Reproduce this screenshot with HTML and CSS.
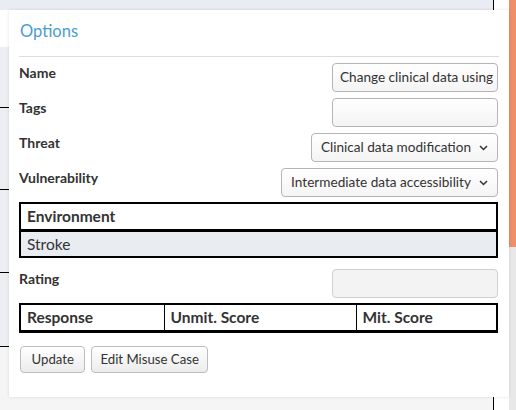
FILE: index.html
```html
<!DOCTYPE html>
<html>
<head>
<meta charset="utf-8">
<link rel="stylesheet" href="styles.css">
</head>
<body>
<div class="page">
  <div class="main">
    <div class="bg">
      <div class="bg-top"></div>
      <div class="bg-white"></div>
      <div class="bg-band b1"></div>
      <div class="bg-band b2"></div>
      <div class="bg-band b3"></div>
      <div class="bg-band b4"></div>
      <div class="bg-rest"></div>
    </div>
    <div class="modal">
      <div class="modal-title">Options</div>
      <div class="modal-body">
        <div class="row">
          <label class="lbl">Name</label>
          <div class="field w166">Change clinical data using</div>
        </div>
        <div class="row">
          <label class="lbl">Tags</label>
          <div class="field w166"></div>
        </div>
        <div class="row">
          <label class="lbl">Threat</label>
          <div class="field select">Clinical data modification<svg class="chev" width="9" height="6" viewBox="0 0 9 6"><polyline points="1,1 4.5,4.5 8,1" fill="none" stroke="#333" stroke-width="1.5"/></svg></div>
        </div>
        <div class="row">
          <label class="lbl">Vulnerability</label>
          <div class="field select">Intermediate data accessibility<svg class="chev" width="9" height="6" viewBox="0 0 9 6"><polyline points="1,1 4.5,4.5 8,1" fill="none" stroke="#333" stroke-width="1.5"/></svg></div>
        </div>
        <table class="tbl env">
          <thead><tr><th>Environment</th></tr></thead>
          <tbody><tr><td>Stroke</td></tr></tbody>
        </table>
        <div class="row rating">
          <label class="lbl">Rating</label>
          <div class="field w166 disabled"></div>
        </div>
        <table class="tbl resp">
          <thead><tr><th class="c1">Response</th><th class="c2">Unmit. Score</th><th class="c3">Mit. Score</th></tr></thead>
        </table>
        <div class="buttons">
          <button class="btn btn-update">Update</button>
          <button class="btn">Edit Misuse Case</button>
        </div>
      </div>
    </div>
  </div>
  <div class="scrollbar"><div class="thumb"></div></div>
</div>
</body>
</html>
```
FILE: styles.css
```css
* { box-sizing: border-box; }
html, body { margin: 0; padding: 0; }
body {
  width: 516px;
  height: 410px;
  overflow: hidden;
  font-family: "Lato", "Liberation Sans", sans-serif;
  color: #333;
  background: #fff;
}
.page { display: flex; width: 516px; height: 410px; }
.main { position: relative; width: 509px; height: 410px; }
.bg { display: flex; flex-direction: column; height: 410px; }
.bg-top { height: 10px; background: #e9ecf2; border-right: 1px solid #000; margin-right: 15px; }
.bg-white { height: 37px; background: #fff; }
.bg-band { background: #eceef2; border-bottom: 1px solid #000; }
.b1 { height: 61px; }
.b2 { height: 82px; }
.b3 { height: 83px; }
.b4 { height: 74px; }
.bg-rest { flex: 1; background: #f5f5f5; border-right: 1px solid #000; margin-right: 15px; }
.scrollbar { width: 7px; height: 410px; background: #e8e8e8; }
.thumb { height: 247px; background: #ef8f69; }

.modal {
  position: absolute;
  left: 9px;
  top: 10px;
  width: 500px;
  height: 387px;
  background: #fff;
  padding: 0 10px;
  box-shadow: 0 0 3px rgba(0,0,0,0.12);
}
.modal-title {
  height: 47px;
  padding: 11px 0 0 1px;
  font-size: 16.5px;
  line-height: 20px;
  color: #4b9cd3;
  border-bottom: 1px solid #ddd;
}
.modal-body { padding: 6px 1px 0 0; display: flex; flex-direction: column; }
.row { display: flex; justify-content: space-between; align-items: flex-start; height: 29px; margin-bottom: 6px; }
.row:nth-child(4) { margin-bottom: 5px; }
.lbl { font-weight: bold; font-size: 14px; line-height: 16px; padding-top: 2px; color: #333; }
.field {
  height: 29px;
  border: 1px solid #b5b5b5;
  border-radius: 4px;
  background: linear-gradient(#fff, #f4f4f4);
  font-size: 13.6px;
  line-height: 27px;
  padding: 0 7px;
  white-space: nowrap;
  overflow: hidden;
  color: #333;
}
.w166 { width: 166px; }
.select { display: flex; align-items: center; gap: 8px; padding: 0 9px; }
.chev { flex: none; }
.disabled { background: #f3f3f3; border-color: #d0d0d0; }
.tbl { width: 479px; border-collapse: collapse; border: 2px solid #000; margin-left: 0; }
.tbl th, .tbl td { text-align: left; font-size: 15.5px; padding: 0 6px; height: 27px; }
.tbl th { font-weight: bold; border-bottom: 3px solid #000; }
.env td { background: #e9ecf1; font-weight: normal; }
.env { margin-bottom: 11px; }
.rating { margin-bottom: 5px; }
.resp th { border-left: 1px solid #000; }
.c1 { width: 144px; }
.c2 { width: 192px; }
.buttons { display: flex; gap: 6px; margin-top: 13px; padding-left: 1px; }
.btn {
  height: 27px;
  border: 1px solid #bdbdbd;
  border-radius: 4px;
  background: linear-gradient(#fff, #ececec);
  font-family: inherit;
  font-size: 13.2px;
  color: #333;
  padding: 0 8px;
}
.btn-update { padding: 0 10.5px; }
```
